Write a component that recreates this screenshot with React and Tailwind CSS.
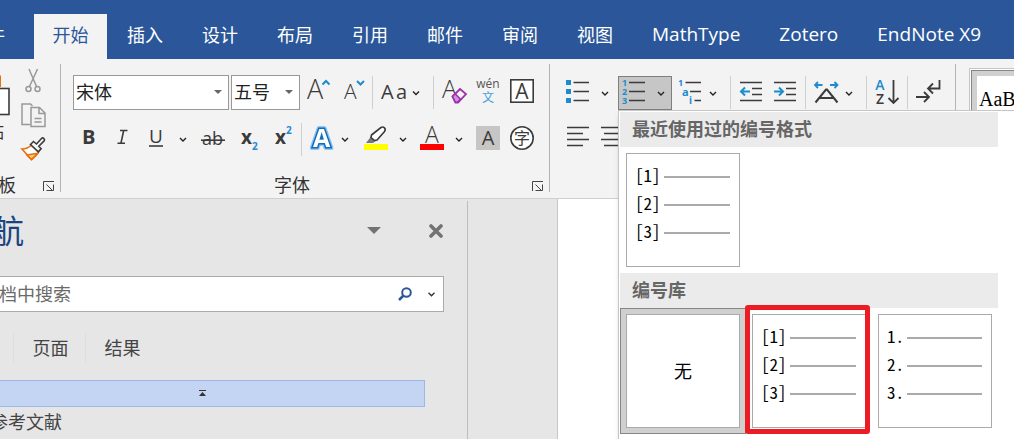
import React from "react";

const INK = "#3b3b3b";
const BLUE = "#1e8bcd";

function Tool({ w, label, h = 36, children, className = "" }) {
  return (
    <button type="button" aria-label={label} className={`block shrink-0 hover:bg-[#d5d5d5] ${className}`}>
      <svg
        width={w}
        height={h}
        viewBox={`0 0 ${w} ${h}`}
        fill="none"
        stroke={INK}
        strokeWidth="1.6"
        className="block font-['Open_Sans',sans-serif]"
      >
        {children}
      </svg>
    </button>
  );
}

function T({ x, y, size, fill = INK, weight = 400, children, ...rest }) {
  return (
    <text x={x} y={y} fontSize={size} fill={fill} fontWeight={weight} stroke="none" {...rest}>
      {children}
    </text>
  );
}

const Chevron = ({ x, y }) => <path d={`M${x} ${y}l3 3 3-3`} strokeWidth="1.4" stroke="#222" />;

const Divider = () => <div className="mt-0.5 h-[33px] w-px shrink-0 bg-[#cfcfcf]" />;
const GroupDivider = () => <div className="mt-[5px] mb-1.5 w-px shrink-0 bg-[#b3b3b3]" />;

function Launcher({ label }) {
  return (
    <button type="button" aria-label={label} className="block shrink-0">
      <svg width="26" height="26" viewBox="0 0 26 26" fill="none" stroke="#444" strokeWidth="1" className="block">
        <path d="M9.500 19V9.500H20M12.500 12.500l6 6M19.500 12.500v6h-7" />
      </svg>
    </button>
  );
}

function Combo({ label, value, className }) {
  return (
    <div className={`relative h-[35px] shrink-0 ${className}`}>
      <select
        aria-label={label}
        className="h-full w-full appearance-none border border-[#999] bg-white pb-0.5 pl-0.5 text-lg leading-none text-[#222] outline-none"
      >
        <option>{value}</option>
      </select>
      <svg width="8" height="4" viewBox="0 0 8 4" className="pointer-events-none absolute top-[15px] right-[7px]">
        <path d="M0 0h8L4 4z" fill="#666" />
      </svg>
    </div>
  );
}

const TABS = ["插入", "设计", "布局", "引用", "邮件", "审阅", "视图"];
const ADDINS = ["MathType", "Zotero", "EndNote X9"];

function TabBar() {
  return (
    <nav className="flex h-[59px] items-end bg-[#2b579a] text-lg text-white">
      <button type="button" className="h-[45px] w-[74px] shrink-0 pb-1 pl-[9px] text-left">文件</button>
      <button type="button" className="h-[45px] w-[73px] shrink-0 bg-[#f3f3f3] pb-1 text-[#2b579a]">开始</button>
      <div className="flex gap-[3px] pl-0.5">
        {TABS.map((t) => (
          <button key={t} type="button" className="h-[45px] shrink-0 px-[18px] pb-1 whitespace-nowrap">
            {t}
          </button>
        ))}
        {ADDINS.map((t) => (
          <button key={t} type="button" className="h-[45px] shrink-0 px-[18px] pb-1 text-[19px] whitespace-nowrap">
            {t}
          </button>
        ))}
      </div>
    </nav>
  );
}

function ClipboardGroup() {
  return (
    <section className="flex w-[100px] shrink-0 flex-col">
      <div className="flex h-[113px]">
        <button type="button" className="flex w-[56px] flex-col items-start pt-[11px] pl-2 text-left text-lg leading-[26px] text-[#333]">
          <svg width="42" height="48" viewBox="0 0 42 48" fill="none" className="block">
            <path d="M8 6.500h24V17M8 6.500V42h8" stroke="#e8710a" strokeWidth="2" />
            <rect x="18" y="18.500" width="23" height="26" fill="#fff" stroke={INK} strokeWidth="1.600" />
          </svg>
          粘贴
        </button>
        <div className="flex flex-col">
          <Tool w={34} h={38} label="剪切">
            <g stroke="#999" strokeWidth="1.500">
              <path d="M13 10l7.500 17.500M21.500 10L13.500 27.500" />
              <circle cx="12.500" cy="30" r="2.500" />
              <circle cx="21.500" cy="30" r="2.500" />
            </g>
          </Tool>
          <Tool w={34} h={38} label="复制">
            <g stroke="#999" strokeWidth="1.500">
              <path d="M14 27.500H6V7h8.500l2 2" />
              <path d="M15 10.500h8.500l5.500 5.500v13.500H15zM23 10.500v6h6M18.500 21.500h7M18.500 25h7" />
            </g>
          </Tool>
          <Tool w={34} h={34} label="格式刷">
            <path d="M6 14c4 0 7-1.500 9.500-4l7 7c-1.500 3-4 5.500-7 7.500z" fill="#fff" stroke="#e8710a" />
            <path d="M11 20c4-.5 7-1.500 10.500-1.500l-6 6z" fill="#fbc87c" stroke="#e8710a" />
            <path d="M14.500 9.500l3-3 3 2.500 5-5.500c1.500-1.500 4 .8 2.600 2.400l-5.300 5.300 2.300 2.600-2.800 3z" fill="#f7f7f7" />
          </Tool>
        </div>
      </div>
      <div className="flex items-center justify-between">
        <span className="pl-0.5 text-lg leading-[26px] text-[#333]">剪贴板</span>
        <Launcher label="剪贴板选项" />
      </div>
    </section>
  );
}

function FontGroup() {
  return (
    <section className="flex w-[488px] shrink-0 flex-col pt-[15px]">
      <div className="flex h-9 pl-3">
        <div className="flex items-end gap-0.5">
          <Combo label="字体" value="宋体" className="w-[156px]" />
          <Combo label="字号" value="五号" className="w-[69px]" />
        </div>
        <Tool w={38} label="增大字号">
          <T x={7} y={25} size={27} weight={300}>A</T>
          <path d="M22.500 10.500l3.500-3.500 3.500 3.500" stroke={BLUE} strokeWidth="2" />
        </Tool>
        <Tool w={34} label="减小字号">
          <T x={6} y={25} size={21} weight={300}>A</T>
          <path d="M19 7l3.500 3.500L26 7" stroke={BLUE} strokeWidth="2" />
        </Tool>
        <Divider />
        <Tool w={60} label="更改大小写">
          <T x={8} y={25} size={20}>A</T>
          <T x={23} y={25} size={20}>a</T>
          <Chevron x={40} y={17.5} />
        </Tool>
        <Divider />
        <Tool w={38} label="清除所有格式">
          <T x={8} y={24} size={25} weight={300}>A</T>
          <path d="M18.500 22.500L26 15l6 5-8 8.500h-2.500z" fill="#f3f3f3" stroke="#9b2fae" strokeWidth="1.800" />
          <path d="M18.500 22.500l2.700-2.700 5.300 5.500-3 3h-2z" fill="#cf93da" stroke="#9b2fae" />
        </Tool>
        <Tool w={32} label="拼音指南">
          <T x={16} y={14} size={12} fill="#555" textAnchor="middle">wén</T>
          <T x={10} y={28} size={12} fill="#3f9fdc" fontFamily="Noto Sans CJK SC">文</T>
        </Tool>
        <Tool w={36} label="字符边框">
          <rect x="6.800" y="5.800" width="22.400" height="22.400" fill="#fff" />
          <T x={18} y={25} size={21} textAnchor="middle">A</T>
        </Tool>
      </div>
      <div className="mt-[11px] flex h-9 pl-3">
        <Tool w={33} label="加粗"><T x={9} y={23} size={20} weight={700}>B</T></Tool>
        <Tool w={33} label="倾斜">
          <path d="M14 9.500h7.500M11.500 22.300H19M17.700 9.500l-2.800 12.800" />
        </Tool>
        <Tool w={33} label="下划线">
          <T x={10} y={22} size={19}>U</T>
          <path d="M10 25h14" />
        </Tool>
        <Tool w={24} label="下划线样式"><Chevron x={8} y={17} /></Tool>
        <Tool w={37} label="删除线">
          <T x={6} y={24} size={18}>ab</T>
          <path d="M5 19.200h24" />
        </Tool>
        <Tool w={35} label="下标">
          <T x={8} y={23} size={19} weight={700}>x</T>
          <T x={19} y={29} size={10} fill={BLUE} weight={700}>2</T>
        </Tool>
        <Tool w={33} label="上标">
          <T x={7} y={23} size={19} weight={700}>x</T>
          <T x={18} y={13} size={10} fill={BLUE} weight={700}>2</T>
        </Tool>
        <Divider />
        <Tool w={36} label="文本效果">
          <T
            x={19.5}
            y={26}
            size={25}
            weight={700}
            textAnchor="middle"
            fill="#fff"
            style={{
              stroke: "#0f6cbd",
              strokeWidth: 3,
              paintOrder: "stroke",
              filter: "drop-shadow(1px 0 0 #8cc4ee) drop-shadow(-1px 0 0 #8cc4ee) drop-shadow(0 1px 0 #8cc4ee) drop-shadow(0 -1px 0 #8cc4ee)",
            }}
          >
            A
          </T>
        </Tool>
        <Tool w={18} label="文本效果选项"><Chevron x={4} y={17} /></Tool>
        <Tool w={39} label="突出显示">
          <path d="M10 22l6.500-8.500 5.500 5-5 3.500z" fill="#777" stroke="none" />
          <path d="M15.500 14L25 6.500c2.500-1.500 5.500 1 3.500 4L21 19l-2.500.5-3.500-3z" fill="#fff" />
          <rect x="8" y="23" width="24" height="6" fill="#ff0" stroke="none" />
        </Tool>
        <Tool w={18} label="突出显示颜色"><Chevron x={5} y={17} /></Tool>
        <Tool w={38} label="字体颜色">
          <T x={19} y={22} size={23} weight={300} textAnchor="middle">A</T>
          <rect x="7" y="23" width="24" height="6" fill="#f00" stroke="none" />
        </Tool>
        <Tool w={19} label="字体颜色选项"><Chevron x={5} y={17} /></Tool>
        <Tool w={34} label="字符底纹">
          <rect x="6" y="5" width="24" height="24" fill="#c8c6c4" stroke="none" />
          <T x={18} y={24} size={20} textAnchor="middle">A</T>
        </Tool>
        <Tool w={36} label="带圈字符">
          <circle cx="18" cy="17" r="11.200" fill="#fff" />
          <T x={18} y={23} size={16} textAnchor="middle" fontFamily="Noto Sans CJK SC">字</T>
        </Tool>
      </div>
      <div className="mt-[15px] flex">
        <span className="flex-1 text-center text-lg leading-[26px] text-[#333]">字体</span>
        <Launcher label="字体选项" />
      </div>
    </section>
  );
}

function FormatTile({ marks, narrow }) {
  return (
    <button type="button" className="m-1.5 block h-[114px] w-[114px] border border-[#aaa] bg-white pr-[9px] pl-2 text-black">
      <span className="flex h-full flex-col pt-[9px]">
        {marks.map((m) => (
          <span
            key={m}
            className="flex h-7 items-center font-['Noto_Sans_Mono_CJK_SC','Noto_Sans_CJK_SC',monospace] text-[17px] leading-6"
          >
            <span className={narrow ? "w-5 shrink-0 pb-1 text-left" : "w-[29px] shrink-0 pb-1 text-left"}>{m}</span>
            <span className="h-0.5 flex-1 bg-[#aaa]" />
          </span>
        ))}
      </span>
    </button>
  );
}

const BRACKETS = ["[1]", "[2]", "[3]"];

function NumberingMenu() {
  const heading = "mr-[19px] h-[35px] bg-[#ebebeb] pl-3 text-lg leading-[35px] font-bold text-[#666]";
  return (
    <div className="absolute top-full left-0 z-10 w-[400px] border border-[#c6c6c6] bg-white pt-px pb-6 pl-px shadow-md">
      <h3 className={heading}>最近使用过的编号格式</h3>
      <div className="flex">
        <FormatTile marks={BRACKETS} />
      </div>
      <h3 className={heading}>编号库</h3>
      <div className="flex">
        <div className="border border-[#868686] bg-[#d0d0ce]">
          <button type="button" className="m-[5px] block h-[114px] w-[114px] border border-[#aaa] bg-white text-lg text-black">
            无
          </button>
        </div>
        <div className="relative">
          <FormatTile marks={BRACKETS} />
          <div className="pointer-events-none absolute -top-[3px] right-0.5 bottom-0 -left-px rounded-[3px] border-[5px] border-[#ed1c24]" />
        </div>
        <FormatTile marks={["1.", "2.", "3."]} narrow />
      </div>
    </div>
  );
}

function ParagraphGroup() {
  return (
    <section className="flex w-[405px] shrink-0 flex-col pt-[15px] pl-1.5">
      <div className="flex h-9">
        <Tool w={40} label="项目符号">
          <path d="M17.500 8.500h15.500M17.500 17.500h15.500M17.500 26.500h15.500" />
          <path d="M10 6h5v5h-5zM10 15h5v5h-5zM10 24h5v5h-5z" fill={BLUE} stroke="none" />
        </Tool>
        <Tool w={22} label="项目符号库"><Chevron x={6} y={18} /></Tool>
        <div className="relative mt-0.5 h-[34px] shrink-0">
          <Tool w={52} h={32} label="编号" className="border border-[#7f7f7f] bg-[#c6c6c6]">
            <T x={3} y={9} size={9} weight={700} fill={BLUE}>1</T>
            <T x={3} y={18} size={9} weight={700} fill={BLUE}>2</T>
            <T x={3} y={27} size={9} weight={700} fill={BLUE}>3</T>
            <path d="M10 5.500h16M10 14.500h16M10 23.500h16" />
            <Chevron x={39} y={15} />
          </Tool>
          <NumberingMenu />
        </div>
        <Tool w={58} label="多级列表">
          <T x={6} y={12} size={9} weight={700} fill={BLUE}>1</T>
          <T x={10} y={22} size={11} weight={700} fill={BLUE}>a</T>
          <T x={17} y={30} size={10} weight={700} fill={BLUE}>i</T>
          <path d="M13.500 8.500H29M18 17.500h11M22.500 26.500H29" />
          <Chevron x={38} y={18} />
        </Tool>
        <Divider />
        <Tool w={37} label="减少缩进量">
          <path d="M9 8.500h22M21 14.500h10M21 20.500h10M9 26.500h22" />
          <path d="M19 17.500h-8.500M14 13.500l-4 4 4 4" stroke={BLUE} strokeWidth="2" />
        </Tool>
        <Tool w={37} label="增加缩进量">
          <path d="M6 8.500h22M18 14.500h10M18 20.500h10M6 26.500h22" />
          <path d="M6 17.500h8.500M11 13.500l4 4-4 4" stroke={BLUE} strokeWidth="2" />
        </Tool>
        <Divider />
        <Tool w={60} label="中文版式">
          <path d="M9.500 28.500l10.500-13h1l10.500 13M13.500 24h14" strokeWidth="2" />
          <path d="M16.500 11H9.500M12 8l-3 3 3 3M24 11h7M28.500 8l3 3-3 3" stroke={BLUE} strokeWidth="1.800" />
          <Chevron x={40} y={18} />
        </Tool>
        <Divider />
        <Tool w={40} label="排序">
          <T x={13} y={16} size={14} weight={600} fill={BLUE} textAnchor="middle">A</T>
          <T x={13} y={30} size={14} weight={600} textAnchor="middle">Z</T>
          <path d="M26.500 6v23M21.500 24l5 5 5-5" strokeWidth="1.800" />
        </Tool>
        <Divider />
        <Tool w={38} label="显示编辑标记">
          <path d="M31.500 6v8.500H21M25 9.500l-5 5 5 5M8 23h12.500M16 18l5 5-5 5" strokeWidth="1.800" />
        </Tool>
      </div>
      <div className="mt-[11px] flex h-9">
        <Tool w={40} label="左对齐">
          <path d="M11 6.500h22M11 12.500h16M11 18.500h22M11 24.500h16" />
        </Tool>
        <Tool w={36} label="居中">
          <path d="M5 6.500h22M8 12.500h16M5 18.500h22M8 24.500h16" />
        </Tool>
      </div>
    </section>
  );
}

function StylesGroup() {
  return (
    <section className="min-w-0 flex-1 overflow-hidden pt-[9px] pl-[13px]">
      <div className="w-[300px] border border-[#c6c6c6] bg-white p-px">
        <button type="button" className="block w-[110px] border border-[#868686] bg-[#d0d0ce] p-[5px]">
          <span className="block h-[70px] overflow-hidden bg-white pt-2 pl-0.5 text-left font-['Liberation_Serif',serif] text-[20px] leading-[30px] whitespace-nowrap text-black">
            AaBbCcDd
          </span>
        </button>
      </div>
    </section>
  );
}

function NavigationPane() {
  return (
    <aside className="mt-0.5 w-[508px] shrink-0 border-r border-[#bdbdbd] text-lg text-[#444]">
      <div className="flex h-[75px] items-center pb-4">
        <h2 className="flex-1 text-[32px] leading-none text-[#1a4480]">导航</h2>
        <button type="button" aria-label="任务窗格选项" className="mr-12">
          <svg width="14" height="7" viewBox="0 0 14 7" className="block"><path d="M0 0h14L7 7z" fill="#737373" /></svg>
        </button>
        <button type="button" aria-label="关闭" className="mr-6">
          <svg width="14" height="14" viewBox="0 0 14 14" className="block" stroke="#737373" strokeWidth="3.600" strokeLinecap="round">
            <path d="M2 2l10 10M12 2L2 12" />
          </svg>
        </button>
      </div>
      <div className="mr-[23px] flex h-9 items-center border border-[#aaa] bg-white">
        <input
          aria-label="在文档中搜索"
          placeholder="在文档中搜索"
          className="min-w-0 flex-1 bg-transparent pl-0.5 outline-none placeholder:text-[#6a6a6a]"
        />
        <button type="button" aria-label="搜索" className="mr-4">
          <svg width="14" height="14" viewBox="0 0 14 14" className="block" fill="none" stroke="#2b579a" strokeWidth="2">
            <circle cx="8.500" cy="5.500" r="4.300" />
            <path d="M5.500 8.500L1 13" strokeWidth="2.500" />
          </svg>
        </button>
        <button type="button" aria-label="搜索选项" className="mr-2">
          <svg width="7" height="5" viewBox="0 0 7 5" className="block" fill="none" stroke="#333" strokeWidth="1.400">
            <path d="M.5.700l3 3 3-3" />
          </svg>
        </button>
      </div>
      <div className="mt-[21px] flex h-[30px]">
        <button type="button" className="w-[53px] pr-4">标题</button>
        <button type="button" className="w-[72px] border-l border-[#dedede] pl-0.5">页面</button>
        <button type="button" className="w-[72px] border-l border-[#dedede] pl-0.5">结果</button>
      </div>
      <button
        type="button"
        aria-label="跳转到开头"
        className="mt-[17px] flex h-[27px] w-[465px] items-center border border-[#9cb9e6] bg-[#c3d5f2] pl-[238px]"
      >
        <svg width="7" height="7" viewBox="0 0 7 7" fill="#333"><path d="M0 0h7v1H0zM3.500 2L7 6H0z" /></svg>
      </button>
      <a href="#references" className="block pl-[30px] leading-[30px]">参考文献</a>
    </aside>
  );
}

export default function App() {
  return (
    <div className="flex min-h-screen flex-col overflow-hidden bg-white font-['Open_Sans','Noto_Sans_CJK_SC',sans-serif]">
      <div className="-ml-10 flex flex-1 flex-col">
        <TabBar />
        <div className="flex h-[140px] border-b border-[#cfcfcf] bg-[#f3f3f3]">
          <ClipboardGroup />
          <GroupDivider />
          <FontGroup />
          <GroupDivider />
          <ParagraphGroup />
          <GroupDivider />
          <StylesGroup />
        </div>
        <main className="flex flex-1 bg-[#e6e6e6]">
          <NavigationPane />
          <div className="w-[89px] shrink-0" />
          <div className="flex-1 border-l border-[#c6c6c6] bg-white" />
        </main>
      </div>
    </div>
  );
}
